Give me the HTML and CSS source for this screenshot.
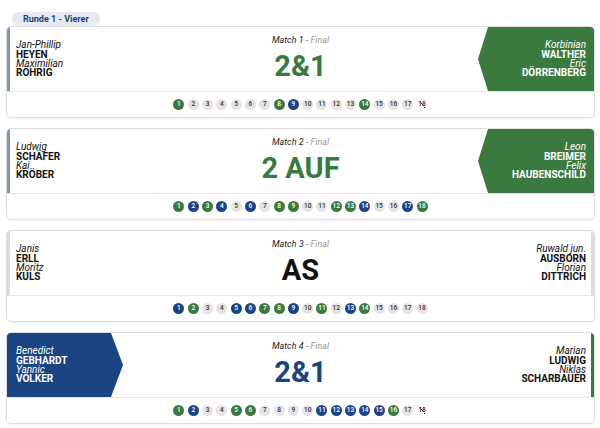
FILE: index.html
```html
<!DOCTYPE HTML>
<html>
<head>
<meta charset="utf-8" />
<title>Runde 1 - Vierer</title>
<link rel="stylesheet" href="styles.css">
</head>

<body>
<div class="round"><span class="round-tab">Runde 1 - Vierer</span></div>

<div class="match">
	<div class="match-top">
		<div class="team team-left bar-blue">
			<i>Jan-Phillip</i><b>HEYEN</b><i>Maximilian</i><b>RÖHRIG</b>
		</div>
		<div class="result">
			<div class="result-label"><em>Match 1 -</em> Final</div>
			<div class="score green">2&amp;1</div>
		</div>
		<div class="team team-right win-green">
			<i>Korbinian</i><b>WALTHER</b><i>Eric</i><b>DÖRRENBERG</b>
		</div>
	</div>
	<div class="holes">
		<span class="hole g">1</span><span class="hole">2</span><span class="hole">3</span><span class="hole">4</span><span class="hole">5</span><span class="hole">6</span><span class="hole">7</span><span class="hole g">8</span><span class="hole b">9</span><span class="hole">10</span><span class="hole">11</span><span class="hole">12</span><span class="hole">13</span><span class="hole g">14</span><span class="hole">15</span><span class="hole">16</span><span class="hole">17</span><span class="hole open">18</span>
	</div>
</div>

<div class="match">
	<div class="match-top">
		<div class="team team-left bar-blue">
			<i>Ludwig</i><b>SCHÄFER</b><i>Kai</i><b>KRÖBER</b>
		</div>
		<div class="result">
			<div class="result-label"><em>Match 2 -</em> Final</div>
			<div class="score green">2 AUF</div>
		</div>
		<div class="team team-right win-green">
			<i>Leon</i><b>BREIMER</b><i>Felix</i><b>HAUBENSCHILD</b>
		</div>
	</div>
	<div class="holes">
		<span class="hole g">1</span><span class="hole b">2</span><span class="hole g">3</span><span class="hole b">4</span><span class="hole">5</span><span class="hole b">6</span><span class="hole">7</span><span class="hole g">8</span><span class="hole g">9</span><span class="hole">10</span><span class="hole">11</span><span class="hole g">12</span><span class="hole g">13</span><span class="hole b">14</span><span class="hole">15</span><span class="hole">16</span><span class="hole b">17</span><span class="hole g">18</span>
	</div>
</div>

<div class="match">
	<div class="match-top">
		<div class="team team-left bar-grey">
			<i>Janis</i><b>ERLL</b><i>Moritz</i><b>KULS</b>
		</div>
		<div class="result">
			<div class="result-label"><em>Match 3 -</em> Final</div>
			<div class="score">AS</div>
		</div>
		<div class="team team-right bar-grey">
			<i>Ruwald jun.</i><b>AUSBORN</b><i>Florian</i><b>DITTRICH</b>
		</div>
	</div>
	<div class="holes">
		<span class="hole b">1</span><span class="hole g">2</span><span class="hole">3</span><span class="hole">4</span><span class="hole b">5</span><span class="hole b">6</span><span class="hole g">7</span><span class="hole g">8</span><span class="hole b">9</span><span class="hole">10</span><span class="hole g">11</span><span class="hole">12</span><span class="hole b">13</span><span class="hole g">14</span><span class="hole">15</span><span class="hole">16</span><span class="hole">17</span><span class="hole">18</span>
	</div>
</div>

<div class="match">
	<div class="match-top">
		<div class="team team-left win-blue">
			<i>Benedict</i><b>GEBHARDT</b><i>Yannic</i><b>VÖLKER</b>
		</div>
		<div class="result">
			<div class="result-label"><em>Match 4 -</em> Final</div>
			<div class="score blue">2&amp;1</div>
		</div>
		<div class="team team-right bar-green">
			<i>Marian</i><b>LUDWIG</b><i>Niklas</i><b>SCHARBAUER</b>
		</div>
	</div>
	<div class="holes">
		<span class="hole g">1</span><span class="hole b">2</span><span class="hole">3</span><span class="hole">4</span><span class="hole g">5</span><span class="hole g">6</span><span class="hole">7</span><span class="hole">8</span><span class="hole">9</span><span class="hole">10</span><span class="hole b">11</span><span class="hole b">12</span><span class="hole b">13</span><span class="hole b">14</span><span class="hole b">15</span><span class="hole g">16</span><span class="hole">17</span><span class="hole open">18</span>
	</div>
</div>
</body>
</html>
```

FILE: styles.css
```css
body { background: #fff; margin: 0; padding: 0 5px 0 6px; font-family: Roboto, "Liberation Sans", sans-serif; color: #111; }

.round { padding: 7px 0 0 6px; height: 14px; margin-bottom: 5px; }
	.round-tab {
		display: inline-block;
		height: 14px;
		line-height: 14px;
		padding: 0 11px;
		border-radius: 7px;
		background: #e6ebf3;
		color: #1e3f78;
		font-size: 9px;
		font-weight: 700;
	}

.match {
	border: 1px solid #dedede;
	border-radius: 5px;
	overflow: hidden;
	margin-bottom: 10px;
	box-shadow: 0 1px 2px rgba(0, 0, 0, 0.06);
}
	.match-top { display: flex; height: 64px; border-bottom: 1px solid #e6e6e6; }
	.team {
		width: 116px;
		display: flex;
		flex-direction: column;
		justify-content: center;
		font-size: 10px;
		line-height: 9.3px;
		box-sizing: border-box;
	}
		.team i { font-style: italic; font-weight: 400; }
		.team b { font-weight: 700; }
	.team-left { padding-left: 9px; align-items: flex-start; }
	.team-right { padding-right: 8px; align-items: flex-end; text-align: right; }

	.bar-blue { border-left: 3px solid #8094b6; padding-left: 6px; }
	.bar-grey.team-left { border-left: 3px solid #dcdcdc; padding-left: 6px; }
	.bar-grey.team-right { border-right: 3px solid #dcdcdc; padding-right: 5px; }
	.bar-green { border-right: 3px solid #3b7a3f; padding-right: 5px; }

	.win-green {
		background: #3b7a3f;
		color: #fff;
		clip-path: polygon(10px 0, 100% 0, 100% 100%, 10px 100%, 0 50%);
	}
	.win-blue {
		background: #1b4485;
		color: #fff;
		clip-path: polygon(0 0, calc(100% - 12px) 0, 100% 50%, calc(100% - 12px) 100%, 0 100%);
	}

	.result { flex: 1; display: flex; flex-direction: column; align-items: center; justify-content: center; }
		.result-label { font-size: 9px; line-height: 11px; font-style: italic; color: #999; }
			.result-label em { color: #222; }
		.score { font-size: 29px; line-height: 34px; font-weight: 700; margin-top: 3px; color: #111; }
		.score.green { color: #3b7a3f; }
		.score.blue { color: #1b4485; }

	.holes { height: 25px; display: flex; align-items: center; justify-content: center; gap: 3.3px; }
		.hole {
			width: 11px;
			height: 11px;
			border-radius: 50%;
			background: #e4e4e4;
			color: #333;
			font-size: 6.5px;
			line-height: 11px;
			text-align: center;
			font-weight: 500;
		}
		.hole.g { background: #3b7a3f; color: #fff; }
		.hole.b { background: #1b4485; color: #fff; }
		.hole.open {
			background: linear-gradient(to top right, transparent 46%, #222 47%, #222 53%, transparent 54%) no-repeat center / 5px 7px;
			color: #222;
			border-radius: 0;
		}
```
